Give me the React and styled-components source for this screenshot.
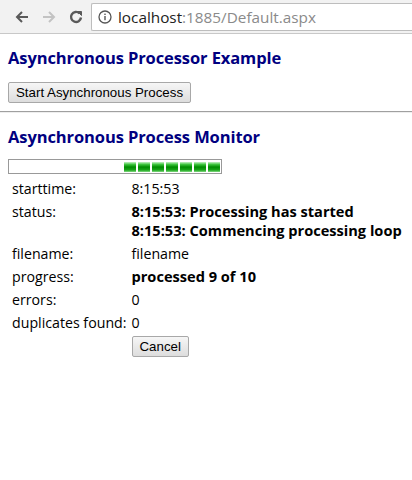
import styled, { createGlobalStyle } from "styled-components";

const Global = createGlobalStyle`
  html, body { margin: 0; padding: 0; background: #fff; }
  body { font-family: "Open Sans", "Noto Sans", sans-serif; }
`;

const Toolbar = styled.div`
  height: 33px;
  display: flex;
  align-items: center;
  background: #f2f2f2;
  border-bottom: 1px solid #c8c8c8;
  padding-left: 8px;
`;

const NavButton = styled.div`
  width: 27px;
  height: 27px;
  display: flex;
  align-items: center;
  justify-content: center;
  color: ${(p) => (p.disabled ? "#c3c3c3" : "#5a5a5a")};
`;

const Omnibox = styled.div`
  flex: 1;
  height: 26px;
  margin-left: 2px;
  background: #fff;
  border: 1px solid #bdbdbd;
  border-right: none;
  border-radius: 2px 0 0 2px;
  display: flex;
  align-items: center;
  padding-left: 6px;
  font-family: "Open Sans", sans-serif;
  font-size: 15.3px;
`;

const Host = styled.span`
  color: #222;
  margin-left: 6px;
`;

const Rest = styled.span`
  color: #8a8a8a;
`;

const Page = styled.div`
  padding: 0 8px;
`;

const Heading = styled.h2`
  margin: ${(p) => p.$m || "0"};
  font-size: 16.5px;
  font-weight: 700;
  color: #000080;
  font-family: "Open Sans", sans-serif;
  letter-spacing: -0.1px;
`;

const Button = styled.button`
  font-family: Arial, "Liberation Sans", sans-serif;
  font-size: 13.3px;
  color: #000;
  height: 21px;
  padding: 0 7px;
  background: linear-gradient(#f6f6f6, #dddddd);
  border: 1px solid #a8a8a8;
  border-radius: 2px;
  margin: ${(p) => p.$m || "0"};
`;

const Rule = styled.hr`
  border: none;
  border-top: 1px solid #a0a0a0;
  border-bottom: 1px solid #eee;
  margin: 8px 0 0 -8px;
  width: calc(100% + 16px);
`;

const Bar = styled.div`
  width: 211px;
  height: 13px;
  border: 1px solid #999;
  display: flex;
  align-items: center;
  justify-content: flex-end;
  gap: 2px;
  padding-right: 1px;
  margin-top: 11px;
`;

const Block = styled.div`
  width: 12px;
  height: 10px;
  background: linear-gradient(#c6f2c6 0%, #3cc33c 25%, #008c00 50%, #1aa51a 80%, #86dc86 100%);
`;

const Table = styled.table`
  border-collapse: separate;
  border-spacing: 0;
  margin-top: 3px;
  font-family: "Open Sans", sans-serif;
  font-size: 14.2px;
  color: #000;

  td {
    padding: 2px 4px;
    vertical-align: top;
    line-height: 19px;
    white-space: nowrap;
  }
  td:first-child {
    width: 114px;
    padding-right: 1px;
  }
`;

const Strong = styled.div`
  font-weight: 700;
  font-size: 14.6px;
`;

const Back = () => (
  <svg width="16" height="16" viewBox="0 0 16 16" fill="none" stroke="currentColor" strokeWidth="2">
    <path d="M14 8H3M8 3L3 8l5 5" />
  </svg>
);

const Forward = () => (
  <svg width="16" height="16" viewBox="0 0 16 16" fill="none" stroke="currentColor" strokeWidth="2">
    <path d="M2 8h11M8 3l5 5-5 5" />
  </svg>
);

const Reload = () => (
  <svg width="16" height="16" viewBox="0 0 16 16" fill="none" stroke="currentColor" strokeWidth="2.4">
    <path d="M13 8.5A5 5 0 1 1 11.5 4.3" />
    <path d="M9.5 2.5h4v4z" fill="currentColor" strokeWidth="1" />
  </svg>
);

const Info = () => (
  <svg width="14" height="14" viewBox="0 0 14 14">
    <circle cx="7" cy="7" r="6" fill="none" stroke="#555" strokeWidth="1.3" />
    <rect x="6.3" y="6" width="1.4" height="4.2" fill="#555" />
    <rect x="6.3" y="3.6" width="1.4" height="1.4" fill="#555" />
  </svg>
);

export default function App() {
  const rows = [
    ["starttime:", ["8:15:53"], false],
    ["status:", ["8:15:53: Processing has started", "8:15:53: Commencing processing loop"], true],
    ["filename:", ["filename"], false],
    ["progress:", ["processed 9 of 10"], true],
    ["errors:", ["0"], false],
    ["duplicates found:", ["0"], false],
  ];
  return (
    <>
      <Global />
      <Toolbar>
        <NavButton><Back /></NavButton>
        <NavButton disabled><Forward /></NavButton>
        <NavButton><Reload /></NavButton>
        <Omnibox>
          <Info />
          <Host>localhost</Host>
          <Rest>:1885/Default.aspx</Rest>
        </Omnibox>
      </Toolbar>
      <Page>
        <Heading $m="12px 0 0">Asynchronous Processor Example</Heading>
        <Button $m="13px 0 0">Start Asynchronous Process</Button>
        <Rule />
        <Heading $m="12px 0 0">Asynchronous Process Monitor</Heading>
        <Bar>
          {Array.from({ length: 7 }).map((_, i) => <Block key={i} />)}
        </Bar>
        <Table>
          <tbody>
            {rows.map(([label, vals, bold]) => (
              <tr key={label}>
                <td>{label}</td>
                <td>
                  {vals.map((v) => (bold ? <Strong key={v}>{v}</Strong> : <div key={v}>{v}</div>))}
                </td>
              </tr>
            ))}
            <tr>
              <td></td>
              <td><Button>Cancel</Button></td>
            </tr>
          </tbody>
        </Table>
      </Page>
    </>
  );
}
